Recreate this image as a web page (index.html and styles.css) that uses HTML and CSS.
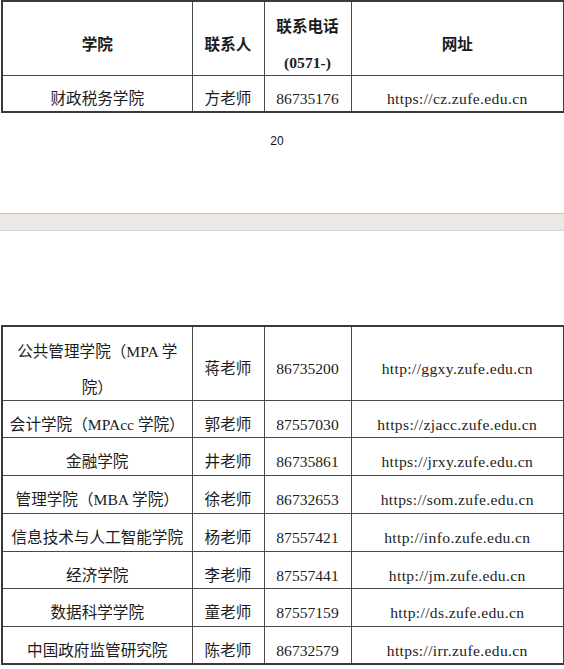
FILE: index.html
```html
<!DOCTYPE html>
<html lang="zh-CN">
<head>
<meta charset="utf-8">
<title>学院联系方式</title>
<link rel="stylesheet" href="styles.css">
</head>
<body>
<div class="page page-top">
  <table class="contacts">
    <colgroup><col class="c1"><col class="c2"><col class="c3"><col class="c4"></colgroup>
    <tr class="head">
      <th>学院</th><th>联系人</th><th class="multi"><div class="lines">联系电话<br>(0571-)</div></th><th>网址</th>
    </tr>
    <tr class="row r36">
      <td>财政税务学院</td><td>方老师</td><td>86735176</td><td class="url">https://cz.zufe.edu.cn</td>
    </tr>
  </table>
  <div class="pageno">20</div>
</div>
<div class="gap"></div>
<div class="page page-bottom">
  <table class="contacts">
    <colgroup><col class="c1"><col class="c2"><col class="c3"><col class="c4"></colgroup>
    <tr class="tall">
      <td class="multi"><div class="lines">公共管理学院（MPA 学<br>院）</div></td><td>蒋老师</td><td>86735200</td><td class="url">http://ggxy.zufe.edu.cn</td>
    </tr>
    <tr class="row">
      <td>会计学院（MPAcc 学院）</td><td>郭老师</td><td>87557030</td><td class="url">https://zjacc.zufe.edu.cn</td>
    </tr>
    <tr class="row r38">
      <td>金融学院</td><td>井老师</td><td>86735861</td><td class="url">https://jrxy.zufe.edu.cn</td>
    </tr>
    <tr class="row r38">
      <td>管理学院（MBA 学院）</td><td>徐老师</td><td>86732653</td><td class="url">https://som.zufe.edu.cn</td>
    </tr>
    <tr class="row r38">
      <td>信息技术与人工智能学院</td><td>杨老师</td><td>87557421</td><td class="url">http://info.zufe.edu.cn</td>
    </tr>
    <tr class="row">
      <td>经济学院</td><td>李老师</td><td>87557441</td><td class="url">http://jm.zufe.edu.cn</td>
    </tr>
    <tr class="row r38">
      <td>数据科学学院</td><td>童老师</td><td>87557159</td><td class="url">http://ds.zufe.edu.cn</td>
    </tr>
    <tr class="row">
      <td>中国政府监管研究院</td><td>陈老师</td><td>86732579</td><td class="url">https://irr.zufe.edu.cn</td>
    </tr>
  </table>
</div>
</body>
</html>
```

FILE: styles.css
```css
html, body {
  margin: 0;
  padding: 0;
  background: #ffffff;
}

body {
  font-family: "Liberation Serif", "Noto Sans CJK SC", serif;
  color: #1c1c1c;
}

.page-top {
  height: 213px;
  box-sizing: border-box;
}

.page-bottom {
  padding-top: 94px;
}

.contacts {
  border-collapse: collapse;
  width: 562px;
  margin-left: 1px;
  table-layout: fixed;
  font-size: 15.6px;
}

.contacts .c1 { width: 190px; }
.contacts .c2 { width: 72px; }
.contacts .c3 { width: 87px; }
.contacts .c4 { width: 213px; }

.contacts th,
.contacts td {
  border: 1px solid #4a4a4a;
  padding: 0 2px;
  text-align: center;
  vertical-align: middle;
  white-space: nowrap;
}

.contacts tr:first-child th,
.contacts tr:first-child td {
  border-top: 2px solid #3a3a3a;
}

.contacts th:first-child,
.contacts td:first-child {
  border-left: 2px solid #3a3a3a;
}

.contacts th:last-child,
.contacts td:last-child {
  border-right: 2px solid #3a3a3a;
}

.contacts tr:last-child td {
  border-bottom: 2px solid #3a3a3a;
}

/* header row */
.head th {
  font-weight: bold;
  vertical-align: top;
  line-height: 36px;
  padding-top: 25px;
  height: 48px;
}

.head th.multi {
  padding-top: 0;
  height: 73px;
}

.lines {
  line-height: 36px;
  margin-top: 7px;
  margin-bottom: -6px;
}

/* single-line rows */
.row td {
  padding-top: 11px;
  height: 25px;
  line-height: 20px;
}

.row.r36 td { height: 24px; }
.row.r38 td { height: 26px; }

/* two-line row */
.tall td {
  vertical-align: top;
  line-height: 20px;
  padding-top: 32px;
  height: 41px;
}

.tall td.multi {
  padding-top: 0;
  height: 73px;
}

.url {
  letter-spacing: 0.35px;
}

.pageno {
  margin-top: 21px;
  text-align: center;
  font-family: "Liberation Sans", sans-serif;
  font-size: 12px;
  line-height: 14px;
  color: #111;
  padding-right: 10px;
}

.gap {
  height: 16px;
  background: #ece8e5;
  border-top: 1px solid #c6c3c0;
  border-bottom: 1px solid #dad6d3;
}
```
